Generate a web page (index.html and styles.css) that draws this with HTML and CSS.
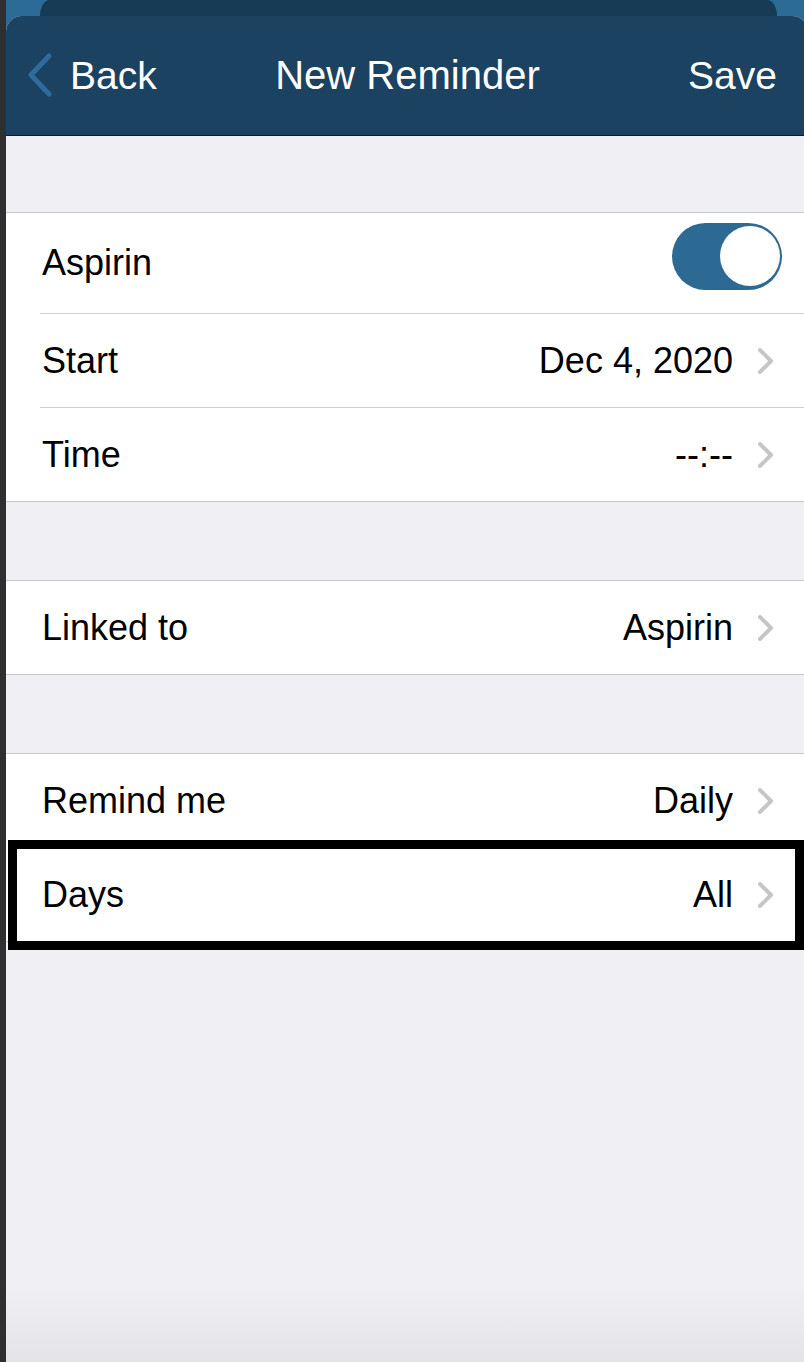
FILE: index.html
```html
<!DOCTYPE html>
<html>
<head>
<meta charset="utf-8">
<link rel="stylesheet" href="styles.css">
</head>
<body>
<div class="screen">
  <div class="peek"></div>
  <div class="sheet">
    <div class="nav">
      <div class="nav-left">
        <svg class="back-chev" width="26" height="44" viewBox="0 0 26 44"><path d="M22 3 L4 22 L22 41" fill="none" stroke="#2d6c9c" stroke-width="5" stroke-linecap="round" stroke-linejoin="round"/></svg>
        <span>Back</span>
      </div>
      <div class="nav-title">New Reminder</div>
      <div class="nav-right">Save</div>
    </div>
    <div class="content">
      <div class="group">
        <div class="row row-toggle">
          <span class="label">Aspirin</span>
          <div class="toggle"><div class="knob"></div></div>
        </div>
        <div class="row">
          <span class="label">Start</span>
          <span class="value">Dec 4, 2020</span>
          <svg class="chev" width="18" height="28" viewBox="0 0 18 28"><path d="M3 3 L14 14 L3 25" fill="none" stroke="#c6c6c9" stroke-width="4" stroke-linecap="round" stroke-linejoin="round"/></svg>
        </div>
        <div class="row">
          <span class="label">Time</span>
          <span class="value">--:--</span>
          <svg class="chev" width="18" height="28" viewBox="0 0 18 28"><path d="M3 3 L14 14 L3 25" fill="none" stroke="#c6c6c9" stroke-width="4" stroke-linecap="round" stroke-linejoin="round"/></svg>
        </div>
      </div>
      <div class="group">
        <div class="row">
          <span class="label">Linked to</span>
          <span class="value">Aspirin</span>
          <svg class="chev" width="18" height="28" viewBox="0 0 18 28"><path d="M3 3 L14 14 L3 25" fill="none" stroke="#c6c6c9" stroke-width="4" stroke-linecap="round" stroke-linejoin="round"/></svg>
        </div>
      </div>
      <div class="group">
        <div class="row">
          <span class="label">Remind me</span>
          <span class="value">Daily</span>
          <svg class="chev" width="18" height="28" viewBox="0 0 18 28"><path d="M3 3 L14 14 L3 25" fill="none" stroke="#c6c6c9" stroke-width="4" stroke-linecap="round" stroke-linejoin="round"/></svg>
        </div>
        <div class="row highlight">
          <span class="label">Days</span>
          <span class="value">All</span>
          <svg class="chev" width="18" height="28" viewBox="0 0 18 28"><path d="M3 3 L14 14 L3 25" fill="none" stroke="#c6c6c9" stroke-width="4" stroke-linecap="round" stroke-linejoin="round"/></svg>
        </div>
      </div>
    </div>
  </div>
</div>
</body>
</html>
```
FILE: styles.css
```css
html, body {
  margin: 0;
  padding: 0;
  height: 100%;
}
body {
  background: #2f2f2f;
  overflow: hidden;
  font-family: "Liberation Sans", Arial, sans-serif;
}
.screen {
  margin-left: 6px;
  height: 1362px;
  background: #2c6b96;
  display: flex;
  flex-direction: column;
}
.peek {
  height: 16px;
  margin: 0 27px 0 34px;
  background: #173a55;
  border-radius: 18px 18px 0 0 / 30px 30px 0 0;
  flex: none;
}
.sheet {
  flex: 1;
  margin-right: -4px;
  border-radius: 16px 16px 0 0;
  overflow: hidden;
  background: linear-gradient(#efeff4 0, #f0eff4 1270px, #e4e4e8 1346px);
  display: flex;
  flex-direction: column;
}
.nav {
  height: 119px;
  background: #1b4260;
  border-bottom: 1px solid #0d1b36;
  display: grid;
  grid-template-columns: 1fr auto 1fr;
  align-items: center;
  color: #fff;
  font-size: 39px;
  padding: 0 31px 0 21px;
  flex: none;
}
.nav-left {
  display: flex;
  align-items: center;
  gap: 17px;
}
.back-chev {
  display: block;
  margin-top: -2px;
}
.nav-title {
  text-align: center;
  font-size: 40px;
  margin-left: 11px;
}
.nav-right {
  text-align: right;
}
.content {
  padding-top: 76px;
  display: flex;
  flex-direction: column;
  gap: 78px;
}
.group {
  background: #fff;
  border-top: 1px solid #c8c7cc;
  border-bottom: 1px solid #c8c7cc;
}
.row {
  position: relative;
  height: 93px;
  display: flex;
  align-items: center;
  padding: 0 33px 0 36px;
  font-size: 36px;
  color: #000;
}
.row + .row {
  height: 94px;
  padding-top: 1px;
  box-sizing: border-box;
}
.row + .row::before {
  content: "";
  position: absolute;
  top: 0;
  left: 34px;
  right: 0;
  height: 1px;
  background: #d0cfd4;
}
.row-toggle {
  height: 100px;
  padding-right: 26px;
}
.label {
  flex: 1;
}
.value {
  margin-right: 24px;
}
.chev {
  display: block;
  margin-top: 1px;
}
.toggle {
  width: 110px;
  height: 67px;
  border-radius: 34px;
  background: #2d6a93;
  display: flex;
  align-items: center;
  justify-content: flex-end;
  padding: 0 2px;
  box-sizing: border-box;
  margin-bottom: 14px;
}
.knob {
  width: 60px;
  height: 60px;
  border-radius: 50%;
  background: #fff;
  box-shadow: 0 0 0 1px #2d6a93;
}
.highlight::after {
  content: "";
  position: absolute;
  top: -7px;
  bottom: -9px;
  left: 2px;
  right: 4px;
  border: 9px solid #000;
}
```
